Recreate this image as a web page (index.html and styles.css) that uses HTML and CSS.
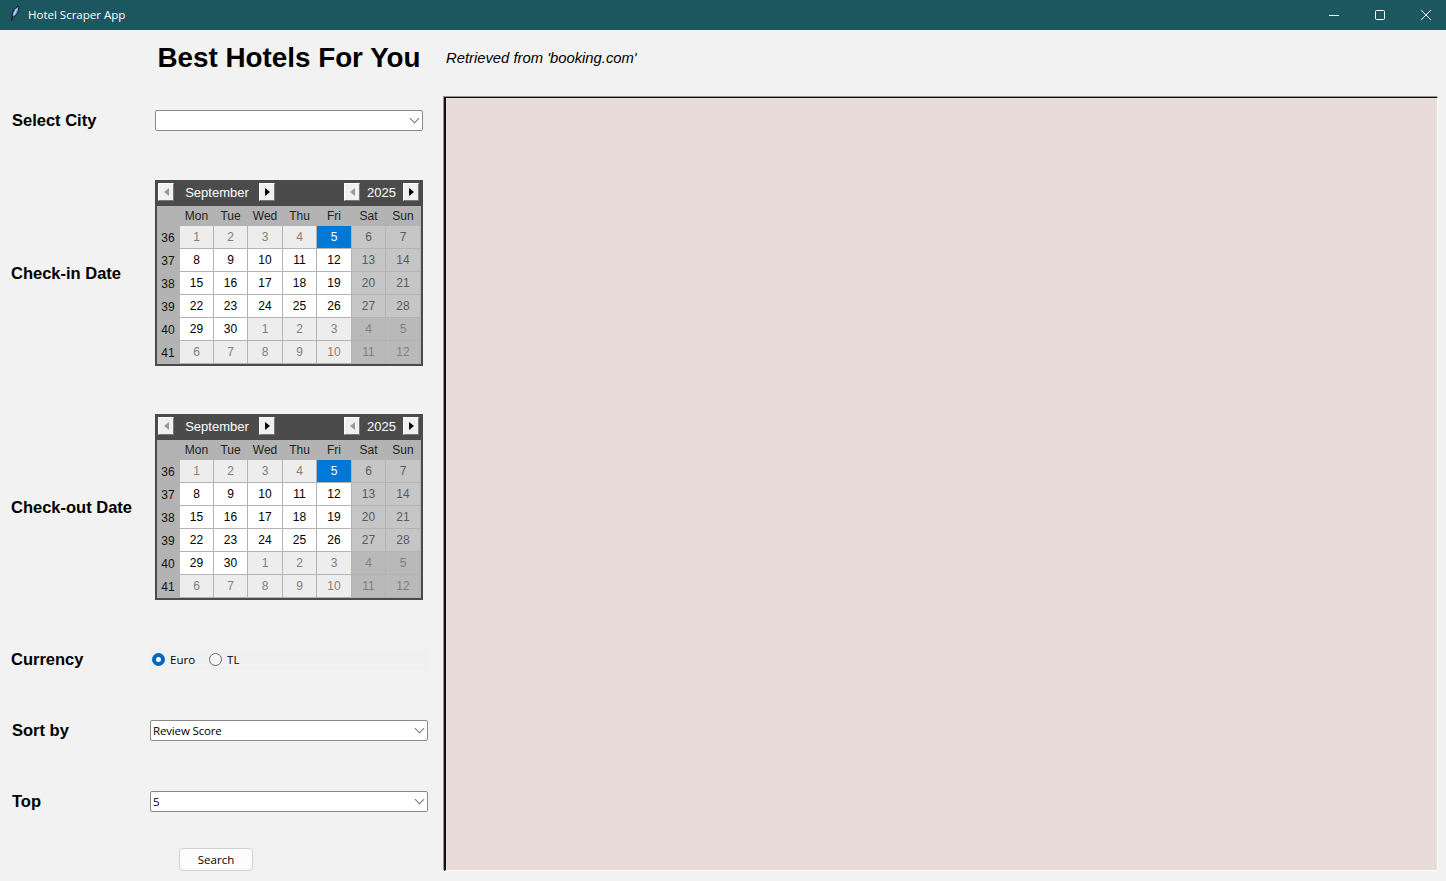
FILE: index.html
```html
<!DOCTYPE html>
<html lang="en">
<head>
    <meta charset="UTF-8">
    <title>Hotel Scraper App</title>
    <link rel="stylesheet" href="styles.css">
</head>
<body>
    <div class="titlebar">
        <svg class="app-icon" width="12" height="18" viewBox="0 0 12 18">
            <path d="M9.500 1 C6 2.500 3.500 6 3 11 L4.500 12 C8 10 10.500 5.500 9.500 1 Z" fill="#6f9fe8" stroke="#10131a" stroke-width="1"/>
            <path d="M7.500 4 L5 10" stroke="#dbe8fb" stroke-width="1" fill="none"/>
            <path d="M3.500 11 L2.500 16" stroke="#10131a" stroke-width="1" fill="none"/>
        </svg>
        <span class="app-name">Hotel Scraper App</span>
        <div class="win-buttons">
            <svg width="12" height="12" viewBox="0 0 12 12"><path d="M1 6.500 H11" stroke="#fff" fill="none"/></svg>
            <svg width="12" height="12" viewBox="0 0 12 12"><rect x="1.500" y="1.500" width="9" height="9" rx="1" stroke="#fff" fill="none"/></svg>
            <svg width="12" height="12" viewBox="0 0 12 12"><path d="M1 1 L11 11 M11 1 L1 11" stroke="#fff" fill="none"/></svg>
        </div>
    </div>
    <div class="main">
        <div class="left">
            <h1 class="heading">Best Hotels For You</h1>

            <div class="row">
                <label class="label">Select City</label>
                <div class="combo combo-city"><span class="arrow"></span></div>
            </div>

            <div class="row row-cal first-cal">
                <label class="label">Check-in Date</label>
                <div class="calendar">
                    <div class="cal-head">
                        <button class="nav"><span class="tri left-tri off"></span></button>
                        <span class="cal-month">September</span>
                        <button class="nav"><span class="tri"></span></button>
                        <button class="nav nav-year"><span class="tri left-tri off"></span></button>
                        <span class="cal-year">2025</span>
                        <button class="nav"><span class="tri"></span></button>
                    </div>
                    <div class="cal-grid">
                        <div class="wk"></div><div class="wd">Mon</div><div class="wd">Tue</div><div class="wd">Wed</div><div class="wd">Thu</div><div class="wd">Fri</div><div class="wd">Sat</div><div class="wd">Sun</div>
                        <div class="wk">36</div><div class="d om">1</div><div class="d om">2</div><div class="d om">3</div><div class="d om">4</div><div class="d sel">5</div><div class="d we">6</div><div class="d we">7</div>
                        <div class="wk">37</div><div class="d">8</div><div class="d">9</div><div class="d">10</div><div class="d">11</div><div class="d">12</div><div class="d we">13</div><div class="d we">14</div>
                        <div class="wk">38</div><div class="d">15</div><div class="d">16</div><div class="d">17</div><div class="d">18</div><div class="d">19</div><div class="d we">20</div><div class="d we">21</div>
                        <div class="wk">39</div><div class="d">22</div><div class="d">23</div><div class="d">24</div><div class="d">25</div><div class="d">26</div><div class="d we">27</div><div class="d we">28</div>
                        <div class="wk">40</div><div class="d">29</div><div class="d">30</div><div class="d om">1</div><div class="d om">2</div><div class="d om">3</div><div class="d omwe">4</div><div class="d omwe">5</div>
                        <div class="wk">41</div><div class="d om">6</div><div class="d om">7</div><div class="d om">8</div><div class="d om">9</div><div class="d om">10</div><div class="d omwe">11</div><div class="d omwe">12</div>
                    </div>
                </div>
            </div>

            <div class="row row-cal second-cal">
                <label class="label">Check-out Date</label>
                <div class="calendar">
                    <div class="cal-head">
                        <button class="nav"><span class="tri left-tri off"></span></button>
                        <span class="cal-month">September</span>
                        <button class="nav"><span class="tri"></span></button>
                        <button class="nav nav-year"><span class="tri left-tri off"></span></button>
                        <span class="cal-year">2025</span>
                        <button class="nav"><span class="tri"></span></button>
                    </div>
                    <div class="cal-grid">
                        <div class="wk"></div><div class="wd">Mon</div><div class="wd">Tue</div><div class="wd">Wed</div><div class="wd">Thu</div><div class="wd">Fri</div><div class="wd">Sat</div><div class="wd">Sun</div>
                        <div class="wk">36</div><div class="d om">1</div><div class="d om">2</div><div class="d om">3</div><div class="d om">4</div><div class="d sel">5</div><div class="d we">6</div><div class="d we">7</div>
                        <div class="wk">37</div><div class="d">8</div><div class="d">9</div><div class="d">10</div><div class="d">11</div><div class="d">12</div><div class="d we">13</div><div class="d we">14</div>
                        <div class="wk">38</div><div class="d">15</div><div class="d">16</div><div class="d">17</div><div class="d">18</div><div class="d">19</div><div class="d we">20</div><div class="d we">21</div>
                        <div class="wk">39</div><div class="d">22</div><div class="d">23</div><div class="d">24</div><div class="d">25</div><div class="d">26</div><div class="d we">27</div><div class="d we">28</div>
                        <div class="wk">40</div><div class="d">29</div><div class="d">30</div><div class="d om">1</div><div class="d om">2</div><div class="d om">3</div><div class="d omwe">4</div><div class="d omwe">5</div>
                        <div class="wk">41</div><div class="d om">6</div><div class="d om">7</div><div class="d om">8</div><div class="d om">9</div><div class="d om">10</div><div class="d omwe">11</div><div class="d omwe">12</div>
                    </div>
                </div>
            </div>

            <div class="row row-currency">
                <label class="label">Currency</label>
                <div class="radios">
                    <span class="radio radio-on"></span><span class="radio-text">Euro</span>
                    <span class="radio"></span><span class="radio-text">TL</span>
                </div>
            </div>

            <div class="row row-sort">
                <label class="label">Sort by</label>
                <div class="combo"><span class="combo-text">Review Score</span><span class="arrow"></span></div>
            </div>

            <div class="row row-top">
                <label class="label">Top</label>
                <div class="combo"><span class="combo-text">5</span><span class="arrow"></span></div>
            </div>

            <button class="search-btn">Search</button>
        </div>

        <div class="right">
            <div class="source">Retrieved from 'booking.com'</div>
            <div class="results"></div>
        </div>
    </div>
</body>
</html>
```

FILE: styles.css
```css
* {
    box-sizing: border-box;
}

html, body {
    height: 100%;
}

body {
    margin: 0;
    background-color: #f2f2f2;
    font-family: "Liberation Sans", Arial, sans-serif;
    color: #000;
    overflow: hidden;
}

.titlebar {
    height: 30px;
    background-color: #1c565f;
    color: #fff;
    display: flex;
    align-items: center;
    padding-left: 9px;
}

.app-icon {
    margin-bottom: 3px;
}

.app-name {
    margin-left: 7px;
    margin-bottom: 1px;
    font-family: "Open Sans", sans-serif;
    font-size: 11.500px;
}

.win-buttons {
    margin-left: auto;
    display: flex;
    gap: 34px;
    padding-right: 14px;
    margin-bottom: 1px;
}

.main {
    display: flex;
    height: 851px;
}

.left {
    width: 443px;
    flex: none;
    display: flex;
    flex-direction: column;
}

.heading {
    height: 66px;
    margin: 0;
    padding-left: 157.500px;
    font-size: 27.800px;
    line-height: 56px;
    font-weight: bold;
    white-space: nowrap;
}

.row {
    display: flex;
    align-items: center;
    height: 48px;
    padding-left: 12px;
}

.label {
    width: 138px;
    flex: none;
    padding-top: 1px;
    font-size: 16.500px;
    font-weight: bold;
    white-space: nowrap;
}

.combo {
    position: relative;
    width: 278px;
    height: 21px;
    background-color: #fff;
    border: 1px solid #8a8a8a;
    border-radius: 2px;
    display: flex;
    align-items: center;
    padding-left: 2px;
}

.combo-city {
    width: 268px;
    margin-left: 5px;
}

.combo-text {
    font-family: "Open Sans", sans-serif;
    font-size: 11.500px;
    letter-spacing: -0.150px;
}

.arrow {
    position: absolute;
    right: 4px;
    top: 4px;
    width: 7px;
    height: 7px;
    border-right: 1px solid #777;
    border-bottom: 1px solid #777;
    transform: rotate(45deg);
}

.row-cal {
    height: 186px;
    padding-left: 11px;
}

.first-cal {
    margin-top: 36px;
}

.second-cal {
    margin-top: 48px;
}

.row-cal .label {
    width: 144px;
    padding-top: 0;
}

.calendar {
    width: 268px;
    height: 186px;
    background-color: #4b4b4b;
    border: 2px solid #4b4b4b;
}

.cal-head {
    height: 24px;
    display: flex;
    align-items: center;
    color: #fff;
    font-size: 13px;
    padding-left: 1px;
    padding-bottom: 4px;
}

.nav {
    width: 16px;
    height: 18px;
    padding: 0;
    flex: none;
    background-color: #f0f0f0;
    border: 1px solid;
    border-color: #fff #777 #777 #fff;
    display: flex;
    align-items: center;
    justify-content: center;
}

.tri {
    width: 0;
    height: 0;
    border-top: 4px solid transparent;
    border-bottom: 4px solid transparent;
    border-left: 5px solid #000;
}

.left-tri {
    border-left: 0;
    border-right: 5px solid #000;
}

.off {
    border-right-color: #9a9a9a;
}

.cal-month {
    width: 85px;
    flex: none;
    text-align: center;
    padding-left: 1px;
}

.nav-year {
    margin-left: 69px;
}

.cal-year {
    width: 43px;
    flex: none;
    text-align: center;
}

.cal-grid {
    display: grid;
    grid-template-columns: 22px 33px 33px 34px 33px 34px 33px 34px;
    grid-template-rows: 19px repeat(6, 22px);
    gap: 1px 1px;
    height: 158px;
    background-color: #b3b3b3;
    font-size: 12px;
}

.wk, .wd, .d {
    display: flex;
    align-items: center;
    justify-content: center;
}

.wk {
    color: #111;
    padding-top: 2px;
}

.wd {
    color: #222;
}

.d {
    background-color: #fff;
}

.om {
    background-color: #ededed;
    color: #808080;
}

.we {
    background-color: #c6c6c6;
    color: #5a5a5a;
}

.omwe {
    background-color: #b9b9b9;
    color: #7f7f7f;
}

.sel {
    background-color: #0078d7;
    color: #fff;
}

.row-currency {
    margin-top: 35px;
    padding-left: 11px;
}

.row-currency .label {
    width: 139px;
}

.radios {
    width: 278px;
    height: 21px;
    background-color: #f0f0f0;
    display: flex;
    align-items: center;
    padding-left: 2px;
    font-family: "Open Sans", sans-serif;
    font-size: 11.500px;
}

.radio {
    width: 13px;
    height: 13px;
    border-radius: 50%;
    border: 1px solid #6a6a6a;
    background-color: #f6f6f6;
}

.radio-on {
    border: 4px solid #0067c0;
    background-color: #fff;
}

.radio-text {
    margin-left: 5px;
    margin-right: 14px;
}

.row-sort {
    margin-top: 23px;
}

.row-top {
    margin-top: 23px;
}

.search-btn {
    width: 74px;
    height: 23px;
    margin: 23px 0 0 179px;
    background-color: #fdfdfd;
    border: 1px solid #d0d0d0;
    border-radius: 4px;
    font-family: "Open Sans", sans-serif;
    font-size: 11.500px;
    padding: 0;
}

.right {
    flex: 1;
    display: flex;
    flex-direction: column;
    padding-right: 8px;
}

.source {
    height: 67px;
    padding-left: 3px;
    font-size: 14.800px;
    line-height: 56px;
    font-style: italic;
}

.results {
    height: 774px;
    margin-left: 1px;
    background-color: #e8dbd8;
    border-top: 1px solid #111;
    border-left: 2px solid #111;
    border-right: 1px solid #fff;
    border-bottom: 1px solid #fff;
    box-shadow: -1px -1px 0 #9a9490;
}
```
